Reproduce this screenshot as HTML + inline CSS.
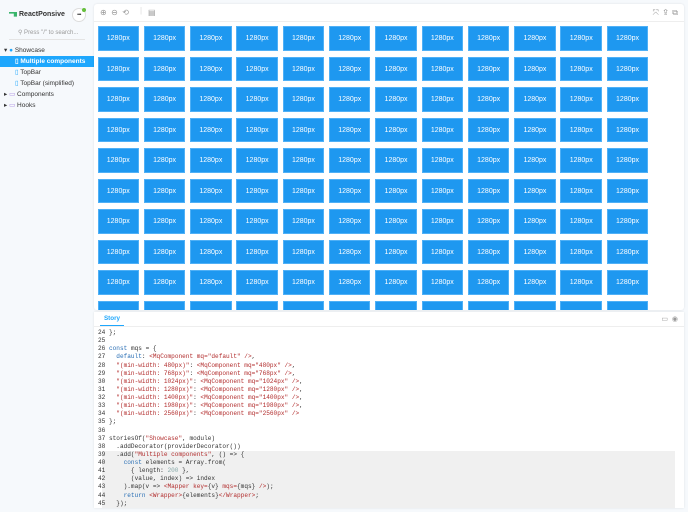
<!DOCTYPE html>
<html><head><meta charset="utf-8"><style>
*{margin:0;padding:0;box-sizing:border-box}
body{width:688px;height:512px;background:#f6f9fc;font-family:"Liberation Sans",sans-serif;position:relative;overflow:hidden}
.side{position:absolute;left:0;top:0;width:94px;height:512px;font-size:6.5px;color:#333}
.logo{position:absolute;left:9px;top:11px;font-weight:bold;font-size:7px;color:#333}
.logo i{display:inline-block;width:8px;height:5px;background:#3ab56b;margin-right:2px;vertical-align:middle;clip-path:polygon(0 0,100% 0,100% 100%,60% 100%,60% 40%,0 40%)}
.dots{position:absolute;left:72px;top:8px;width:14px;height:14px;border-radius:50%;border:1px solid #ddd;background:#fff;font-size:5px;text-align:center;line-height:12px;color:#333;letter-spacing:-0.5px}
.dots:after{content:"";position:absolute;right:-1px;top:-1px;width:4px;height:4px;background:#66bf3c;border-radius:50%}
.search{position:absolute;left:9px;top:29px;width:76px;border-bottom:1px solid #e4e4e4;padding:0 0 3px 9px;color:#999;font-size:6px}
.item{position:absolute;left:0;width:94px;height:11px;line-height:11px}
.sel{background:#1ea7fd;color:#fff;font-weight:bold}
.main{position:absolute;left:94px;top:4px;width:590px;height:306px;background:#fff;box-shadow:0 0 2px rgba(0,0,0,.1);border-radius:3px;overflow:hidden}
.tb{height:18px;border-bottom:1px solid #eee;position:relative;color:#999;font-size:8px}
.grid{position:absolute;left:3.5px;top:22px;display:grid;grid-template-columns:repeat(12,41.5px);column-gap:4.8px;grid-auto-rows:24.5px;row-gap:6px}
.grid div{background:#1e98f0;color:#fff;font-size:7px;text-align:center;line-height:24.5px;border:1px solid #4fb0f6}
.bot{position:absolute;left:94px;top:312px;width:590px;height:196px;background:#fff;box-shadow:0 0 2px rgba(0,0,0,.1)}
.tab{position:absolute;left:6px;top:3px;font-size:6.3px;font-weight:bold;color:#1ea7fd;border-bottom:2px solid #1ea7fd;padding:0 0 3px 0;width:24px;text-align:center}
.bl{position:absolute;left:0;top:14px;width:590px;border-top:1px solid #eee}
pre{position:absolute;left:4px;top:17px;font-family:"Liberation Mono",monospace;font-size:6.1px;line-height:8.12px;color:#333}
.hl{position:absolute;left:8px;top:139px;width:573px;height:57px;background:#f0f0f0}
.r{color:#b22d2d}.b{color:#2a6fb5}.n{color:#8aa}
</style></head><body>
<div class="side">
<div class="logo"><i></i>ReactPonsive</div>
<div class="dots">•••</div>
<div class="search">⚲ Press "/" to search...</div>
<div class="item" style="top:45px;padding-left:4px">▾ <span style="color:#1ea7fd">●</span> Showcase</div>
<div class="item sel" style="top:56px;padding-left:15px">▯ Multiple components</div>
<div class="item" style="top:67px;padding-left:15px"><span style="color:#1ea7fd">▯</span> TopBar</div>
<div class="item" style="top:78px;padding-left:15px"><span style="color:#1ea7fd">▯</span> TopBar (simplified)</div>
<div class="item" style="top:89px;padding-left:4px">▸ <span style="color:#a98be0">▭</span> Components</div>
<div class="item" style="top:100px;padding-left:4px">▸ <span style="color:#a98be0">▭</span> Hooks</div>
</div>
<div class="main">
<div class="tb"><span style="position:absolute;left:6px;top:4px">⊕ &nbsp;⊖ &nbsp;⟲</span><span style="position:absolute;left:46px;top:2px;color:#ddd">|</span><span style="position:absolute;left:54px;top:4px">▤</span><span style="position:absolute;right:6px;top:4px">⤧ &nbsp;⇪ &nbsp;⧉</span></div>
<div class="grid">
<div>1280px</div><div>1280px</div><div>1280px</div><div>1280px</div><div>1280px</div><div>1280px</div><div>1280px</div><div>1280px</div><div>1280px</div><div>1280px</div><div>1280px</div><div>1280px</div>
<div>1280px</div><div>1280px</div><div>1280px</div><div>1280px</div><div>1280px</div><div>1280px</div><div>1280px</div><div>1280px</div><div>1280px</div><div>1280px</div><div>1280px</div><div>1280px</div>
<div>1280px</div><div>1280px</div><div>1280px</div><div>1280px</div><div>1280px</div><div>1280px</div><div>1280px</div><div>1280px</div><div>1280px</div><div>1280px</div><div>1280px</div><div>1280px</div>
<div>1280px</div><div>1280px</div><div>1280px</div><div>1280px</div><div>1280px</div><div>1280px</div><div>1280px</div><div>1280px</div><div>1280px</div><div>1280px</div><div>1280px</div><div>1280px</div>
<div>1280px</div><div>1280px</div><div>1280px</div><div>1280px</div><div>1280px</div><div>1280px</div><div>1280px</div><div>1280px</div><div>1280px</div><div>1280px</div><div>1280px</div><div>1280px</div>
<div>1280px</div><div>1280px</div><div>1280px</div><div>1280px</div><div>1280px</div><div>1280px</div><div>1280px</div><div>1280px</div><div>1280px</div><div>1280px</div><div>1280px</div><div>1280px</div>
<div>1280px</div><div>1280px</div><div>1280px</div><div>1280px</div><div>1280px</div><div>1280px</div><div>1280px</div><div>1280px</div><div>1280px</div><div>1280px</div><div>1280px</div><div>1280px</div>
<div>1280px</div><div>1280px</div><div>1280px</div><div>1280px</div><div>1280px</div><div>1280px</div><div>1280px</div><div>1280px</div><div>1280px</div><div>1280px</div><div>1280px</div><div>1280px</div>
<div>1280px</div><div>1280px</div><div>1280px</div><div>1280px</div><div>1280px</div><div>1280px</div><div>1280px</div><div>1280px</div><div>1280px</div><div>1280px</div><div>1280px</div><div>1280px</div>
<div>1280px</div><div>1280px</div><div>1280px</div><div>1280px</div><div>1280px</div><div>1280px</div><div>1280px</div><div>1280px</div><div>1280px</div><div>1280px</div><div>1280px</div><div>1280px</div>
</div>
</div>
<div class="bot">
<div class="tab">Story</div>
<span style="position:absolute;right:6px;top:3px;font-size:7px;color:#999">▭ &nbsp;◉</span>
<div class="bl"></div>
<div class="hl"></div>
<pre>24 };
25
26 <span class="b">const</span> mqs = {
27   <span class="b">default</span>: <span class="r">&lt;MqComponent mq="default" /&gt;</span>,
28   <span class="r">"(min-width: 480px)"</span>: <span class="r">&lt;MqComponent mq="480px" /&gt;</span>,
29   <span class="r">"(min-width: 768px)"</span>: <span class="r">&lt;MqComponent mq="768px" /&gt;</span>,
30   <span class="r">"(min-width: 1024px)"</span>: <span class="r">&lt;MqComponent mq="1024px" /&gt;</span>,
31   <span class="r">"(min-width: 1280px)"</span>: <span class="r">&lt;MqComponent mq="1280px" /&gt;</span>,
32   <span class="r">"(min-width: 1400px)"</span>: <span class="r">&lt;MqComponent mq="1400px" /&gt;</span>,
33   <span class="r">"(min-width: 1980px)"</span>: <span class="r">&lt;MqComponent mq="1980px" /&gt;</span>,
34   <span class="r">"(min-width: 2560px)"</span>: <span class="r">&lt;MqComponent mq="2560px" /&gt;</span>
35 };
36
37 storiesOf(<span class="r">"Showcase"</span>, module)
38   .addDecorator(providerDecorator())
39   .add(<span class="r">"Multiple components"</span>, () =&gt; {
40     <span class="b">const</span> elements = Array.from(
41       { length: <span class="n">200</span> },
42       (value, index) =&gt; index
43     ).map(v =&gt; <span class="r">&lt;Mapper key=</span>{v} <span class="r">mqs=</span>{mqs} <span class="r">/&gt;</span>);
44     <span class="b">return</span> <span class="r">&lt;Wrapper&gt;</span>{elements}<span class="r">&lt;/Wrapper&gt;</span>;
45   });</pre>
</div>
</body></html>
